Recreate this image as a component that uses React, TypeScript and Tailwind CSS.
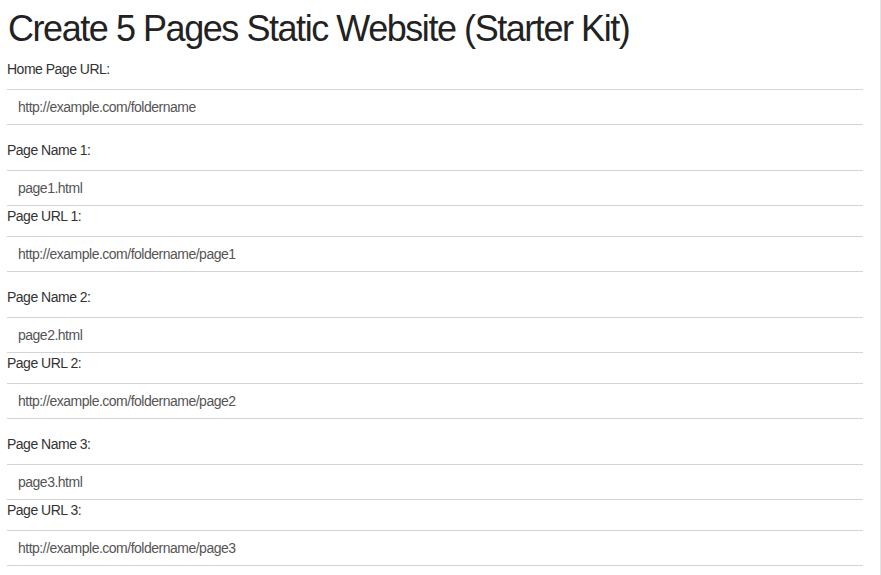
const fields: { label: string; value: string; gap: boolean }[] = [
  { label: 'Home Page URL:', value: 'http://example.com/foldername', gap: true },
  { label: 'Page Name 1:', value: 'page1.html', gap: false },
  { label: 'Page URL 1:', value: 'http://example.com/foldername/page1', gap: true },
  { label: 'Page Name 2:', value: 'page2.html', gap: false },
  { label: 'Page URL 2:', value: 'http://example.com/foldername/page2', gap: true },
  { label: 'Page Name 3:', value: 'page3.html', gap: false },
  { label: 'Page URL 3:', value: 'http://example.com/foldername/page3', gap: true },
];

function Field({ label, value, gap }: { label: string; value: string; gap: boolean }) {
  return (
    <div className={gap ? 'mb-[15px]' : ''}>
      <label className="block h-[20px] text-[14px] leading-[20px] tracking-[-0.5px] text-[#333] mb-[10px]">
        {label}
      </label>
      <input
        readOnly
        defaultValue={value}
        className="block w-full h-[36px] border-y border-[#d4d4d8] bg-white px-[11px] text-[14px] tracking-[-0.5px] text-[#555] outline-none"
        style={{ fontFamily: '"Liberation Sans", Arial, sans-serif' }}
      />
    </div>
  );
}

export default function App() {
  return (
    <div
      className="min-h-[575px] w-full bg-white border-r border-[#e3e3e3] pt-[9px] pl-[7px] pr-[17px]"
      style={{ fontFamily: '"Liberation Sans", Arial, sans-serif' }}
    >
      <h1 className="text-[36px] leading-[40px] tracking-[-1.45px] text-[#222] mb-[10px] pl-[1px]">
        Create 5 Pages Static Website (Starter Kit)
      </h1>
      <form>
        {fields.map((f) => (
          <Field key={f.label} {...f} />
        ))}
      </form>
    </div>
  );
}
